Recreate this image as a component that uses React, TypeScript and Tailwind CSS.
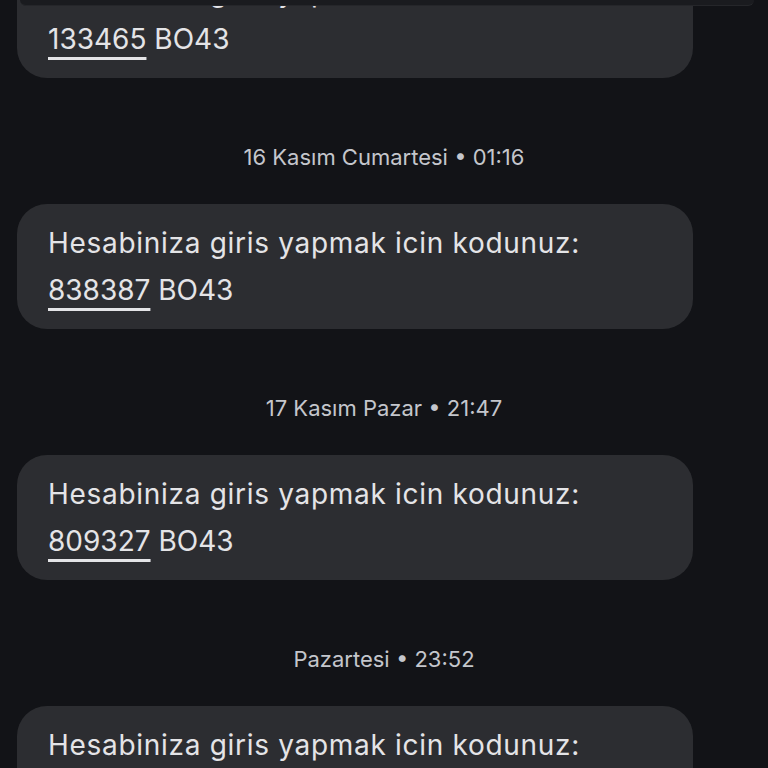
const messages = [
  { stamp: null, code: "133465" },
  { stamp: "16 Kasım Cumartesi • 01:16", code: "838387" },
  { stamp: "17 Kasım Pazar • 21:47", code: "809327" },
  { stamp: "Pazartesi • 23:52", code: "" },
];

function Bubble({ code }: { code: string }) {
  return (
    <div className="mx-[17px] mr-[75px] rounded-[30px] bg-[#2c2d31] px-[31px] pt-[16px] pb-[15px] text-[28px] leading-[47px] text-[#e4e4e7]">
      <div className="tracking-[0.7px]">Hesabiniza giris yapmak icin kodunuz:</div>
      <div>
        <span className="underline decoration-[3px] underline-offset-[8px]">
          {code}
        </span>{" "}
        BO43
      </div>
    </div>
  );
}

export default function App() {
  return (
    <div
      className="relative h-[768px] w-[768px] overflow-hidden bg-[#121317]"
      style={{ fontFamily: "Inter, Roboto, sans-serif" }}
    >
      <div className="-mt-[47px] flex flex-col">
        {messages.map((m, i) => (
          <div key={i}>
            {m.stamp && (
              <div className="mt-[66px] mb-[34px] text-center text-[22px] leading-[26px] text-[#c4c6cc]">
                {m.stamp}
              </div>
            )}
            <Bubble code={m.code} />
          </div>
        ))}
      </div>
      <div className="absolute top-0 left-[20px] right-[14px] h-[6px] rounded-b-[6px] border-b border-[#25262a] bg-[#1a1b1f]" />
    </div>
  );
}
